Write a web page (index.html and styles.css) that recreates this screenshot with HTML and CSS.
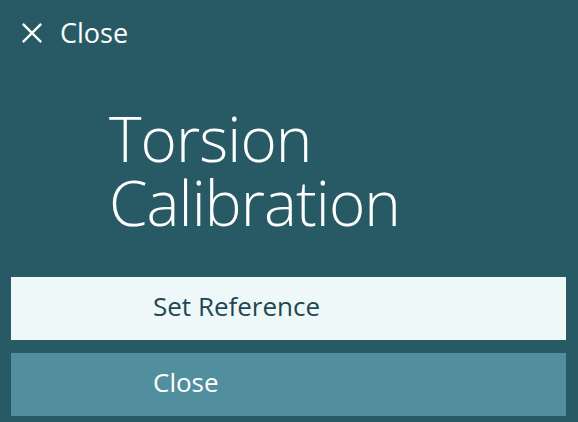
FILE: index.html
```html
<!DOCTYPE html>
<html lang="en">
<head>
    <meta charset="UTF-8">
    <meta name="viewport" content="width=device-width, initial-scale=1.0">
    <title>Torsion Calibration</title>
    <link rel="stylesheet" href="styles.css">
</head>
<body>
    <div class="page">
        <button class="back-button">
            <svg class="back-icon" viewBox="0 0 24 24" width="24" height="24">
                <path d="M2 2 L22 22 M22 2 L2 22" stroke="#ffffff" stroke-width="2.5" fill="none"/>
            </svg>
            <span>Close</span>
        </button>
        <h1 class="title">Torsion<br>Calibration</h1>
        <div class="actions">
            <button class="action action-primary">Set Reference</button>
            <button class="action action-secondary">Close</button>
        </div>
    </div>
</body>
</html>
```

FILE: styles.css
```css
html, body {
    margin: 0;
    height: 100%;
}
body {
    background-color: #285a66;
    font-family: 'Open Sans', sans-serif;
    color: #ffffff;
}
.page {
    padding: 11px 12px 0 11px;
}
.back-button {
    display: flex;
    align-items: center;
    gap: 17px;
    padding: 3px 0 0 10px;
    border: none;
    background: none;
    color: #ffffff;
    font-family: inherit;
    font-size: 27px;
    cursor: pointer;
}
.back-icon {
    width: 22px;
    height: 22px;
}
.title {
    margin: 55px 0 0 98px;
    font-size: 62px;
    font-weight: 300;
    line-height: 64px;
    letter-spacing: -0.9px;
}
.actions {
    display: flex;
    flex-direction: column;
    gap: 13px;
    margin-top: 43px;
}
.action {
    height: 63px;
    padding: 0 0 5px 142px;
    border: none;
    text-align: left;
    font-family: inherit;
    font-size: 26px;
    cursor: pointer;
}
.action-primary {
    background-color: #eef8f8;
    color: #1f4751;
}
.action-secondary {
    background-color: #528f9e;
    color: #ffffff;
}
```
